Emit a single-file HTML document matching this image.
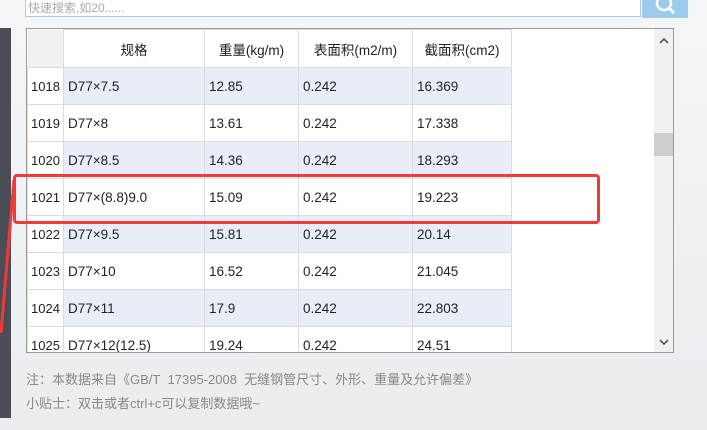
<!DOCTYPE html>
<html><head><meta charset="utf-8"><style>
body{margin:0;width:707px;height:430px;overflow:hidden;background:linear-gradient(#f4f6f8,#e9edf0);font-family:"Liberation Sans","Noto Sans CJK SC",sans-serif;position:relative}
.dark{position:absolute;left:0;top:28px;width:11px;height:390px;background:#4a4d55}
.search{position:absolute;left:25px;top:-2px;width:616px;height:19px;border:1px solid #a9cbe6;background:#fff;color:#aaa;font-size:12px;line-height:19px;padding-left:2px;box-sizing:border-box}
.btn{position:absolute;left:642px;top:0;width:46px;height:18px;background:#9ccbeb}
.tbl{position:absolute;left:26px;top:28px;width:648px;height:325px;border:1px solid #9a9a9a;background:#fff;box-sizing:border-box;overflow:hidden}
.sb{position:absolute;left:627px;top:0;width:19px;height:323px;background:#f0f0f0}
.thumb{position:absolute;left:0;top:104px;width:19px;height:23px;background:#cdcdcd}
table{border-collapse:collapse;position:absolute;left:0;top:0;table-layout:fixed;width:484px}
td{border:1px solid #dcdcdc;height:36px;padding:0 0 0 4px;font-size:13.5px;color:#222;white-space:nowrap;overflow:hidden}
tr.h td{height:37px;text-align:center;padding:0}
tr.b td{background:#e8edf7}
td.rh{background:#fff!important;font-size:13px;padding-left:3px}
tr.h td.rh{background:#f0f0f0!important}
.red{position:absolute;left:13px;top:174px;width:587px;height:50px;border:3px solid #f03a3a;border-radius:4px;box-sizing:border-box}
.foot{position:absolute;left:26px;font-size:13px;color:#888}
</style></head><body>
<div class="dark"></div>
<div class="search">快速搜索,如20......</div>
<div class="btn"><svg width="46" height="18"><circle cx="22" cy="3" r="7" fill="none" stroke="#fff" stroke-width="2.5"/><path d="M27 8l5 5" stroke="#fff" stroke-width="3"/></svg></div>
<div class="tbl">
<table>
<colgroup><col style="width:36px"><col style="width:141px"><col style="width:94px"><col style="width:114px"><col style="width:99px"></colgroup>
<tr class="h"><td class="rh" style="border-top:0;border-left:0"></td><td>规格</td><td>重量(kg/m)</td><td>表面积(m2/m)</td><td>截面积(cm2)</td></tr>
<tr class="b"><td class="rh">1018</td><td>D77×7.5</td><td>12.85</td><td>0.242</td><td>16.369</td></tr>
<tr><td class="rh">1019</td><td>D77×8</td><td>13.61</td><td>0.242</td><td>17.338</td></tr>
<tr class="b"><td class="rh">1020</td><td>D77×8.5</td><td>14.36</td><td>0.242</td><td>18.293</td></tr>
<tr><td class="rh">1021</td><td>D77×(8.8)9.0</td><td>15.09</td><td>0.242</td><td>19.223</td></tr>
<tr class="b"><td class="rh">1022</td><td>D77×9.5</td><td>15.81</td><td>0.242</td><td>20.14</td></tr>
<tr><td class="rh">1023</td><td>D77×10</td><td>16.52</td><td>0.242</td><td>21.045</td></tr>
<tr class="b"><td class="rh">1024</td><td>D77×11</td><td>17.9</td><td>0.242</td><td>22.803</td></tr>
<tr><td class="rh">1025</td><td>D77×12(12.5)</td><td>19.24</td><td>0.242</td><td>24.51</td></tr>
</table>
<div class="sb"><div class="thumb"></div>
<svg style="position:absolute;left:5px;top:8px" width="10" height="8"><path d="M1 6l4-4 4 4" fill="none" stroke="#555" stroke-width="1.6"/></svg>
<svg style="position:absolute;left:5px;top:309px" width="10" height="8"><path d="M1 2l4 4 4-4" fill="none" stroke="#555" stroke-width="1.6"/></svg>
</div>
</div>
<div class="red"></div>
<svg style="position:absolute;left:0;top:178px" width="16" height="160"><path d="M14 2L1 155" stroke="#f03a3a" stroke-width="3"/></svg>
<div class="foot" style="top:369px">注：本数据来自《GB/T&nbsp; 17395-2008&nbsp; 无缝钢管尺寸、外形、重量及允许偏差》</div>
<div class="foot" style="top:393px">小贴士：双击或者ctrl+c可以复制数据哦~</div>
</body></html>
